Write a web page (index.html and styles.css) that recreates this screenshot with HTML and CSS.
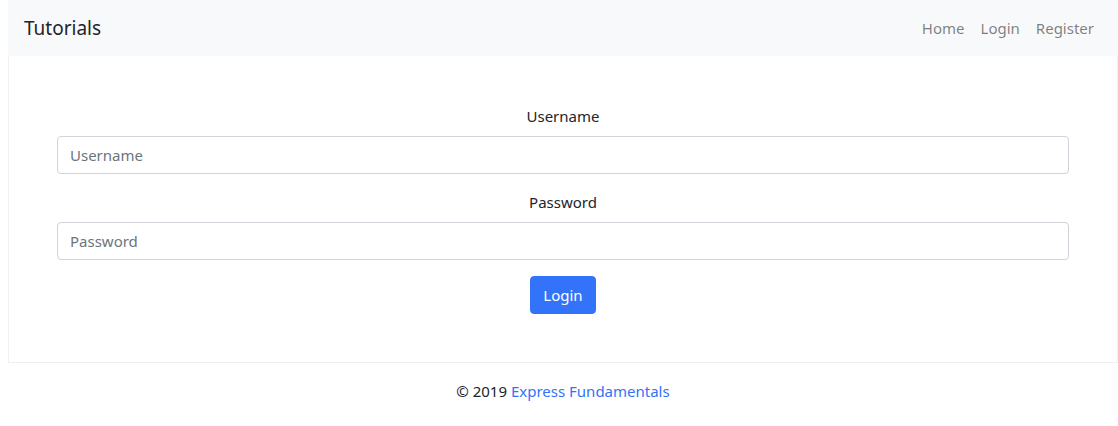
FILE: index.html
```html
<!DOCTYPE html>
<html lang="en">
<head>
<meta charset="utf-8">
<title>Tutorials</title>
<link rel="stylesheet" href="styles.css">
</head>
<body>
<div class="page">
  <nav class="navbar">
    <a class="brand" href="#">Tutorials</a>
    <ul class="nav">
      <li><a class="nav-link" href="#">Home</a></li>
      <li><a class="nav-link" href="#">Login</a></li>
      <li><a class="nav-link" href="#">Register</a></li>
    </ul>
  </nav>
  <main class="card">
    <form class="form">
      <div class="form-group">
        <label class="label" for="username">Username</label>
        <input class="input" id="username" type="text" placeholder="Username">
      </div>
      <div class="form-group">
        <label class="label" for="password">Password</label>
        <input class="input" id="password" type="password" placeholder="Password">
      </div>
      <div class="actions">
        <button class="btn" type="submit">Login</button>
      </div>
    </form>
  </main>
  <footer class="footer">© 2019 <a class="footer-link" href="#">Express Fundamentals</a></footer>
</div>
</body>
</html>
```

FILE: styles.css
```css
* { box-sizing: border-box; }
html, body { margin: 0; padding: 0; background: #fff; }
body {
  font-family: "Noto Sans", "Open Sans", sans-serif;
  font-size: 15px;
  line-height: 24px;
  color: #212529;
}
.page { margin-left: 8px; width: 1110px; }
.navbar {
  display: flex;
  align-items: center;
  justify-content: space-between;
  background: #f8f9fa;
  height: 56px;
  padding: 0 16px;
}
.brand {
  font-size: 19px;
  line-height: 30px;
  color: #212529;
  text-decoration: none;
}
.nav { display: flex; list-style: none; margin: 0; padding: 0; }
.nav-link {
  display: block;
  padding: 0 8px;
  color: rgba(0,0,0,0.5);
  text-decoration: none;
  line-height: 24px;
}
.nav li:last-child .nav-link { padding-right: 8px; }
.card {
  border: 1px solid rgba(0,0,0,0.06);
  border-top: none;
  padding: 48px;
}
.form-group { display: flex; flex-direction: column; margin-bottom: 16px; }
.label { text-align: center; margin-bottom: 8px; }
.input {
  height: 38px;
  padding: 6px 12px;
  font: inherit;
  color: #495057;
  border: 1px solid #ced4da;
  border-radius: 4px;
  background: #fff;
}
.input::placeholder { color: #6c757d; }
.actions { display: flex; justify-content: center; }
.btn {
  height: 38px;
  padding: 6px 12px;
  font: inherit;
  color: #fff;
  background: #3273fa;
  border: 1px solid #3273fa;
  border-radius: 4px;
}
.footer { text-align: center; margin-top: 16px; }
.footer-link { color: #3273fa; text-decoration: none; }
```
